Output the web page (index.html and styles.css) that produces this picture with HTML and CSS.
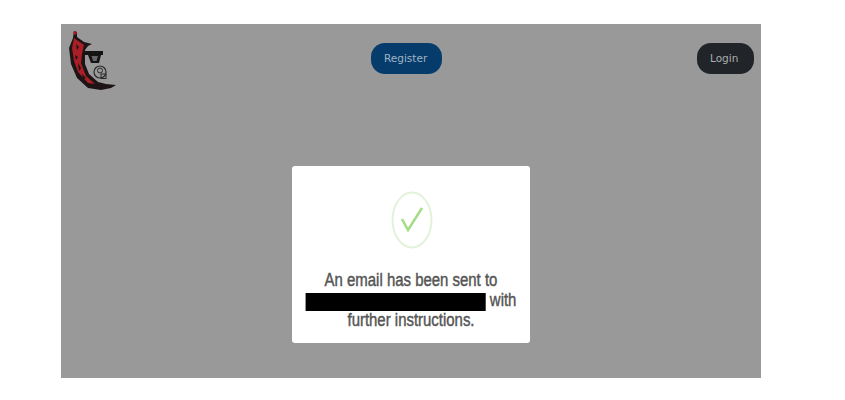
FILE: index.html
```html
<!DOCTYPE html>
<html lang="en">
<head>
    <meta charset="UTF-8" />
    <title>Email sent</title>
    <link rel="stylesheet" href="styles.css">
</head>
<body>
    <div class="stage">
        <div class="top-bar">
            <svg class="logo" viewBox="0 0 49 60" width="49" height="60">
                <path d="M6 1 L9 2 L9 7 L16 12 L24 14 L20 16 L17 20 L17 27 L17 34 L21 44 L30 52 L38 54 L48 55 L43 58 L33 60 L20 58 L9 48 L3 34 L1 18 L5 8 Z" fill="#1d1416"/>
                <path d="M6 8 L16 15 L14 24 L13 33 L18 46 L27 54 L20 53 L10 42 L6 31 L4 18 Z" fill="#a81f27"/>
                <path d="M8 14 L11 17 L9 20 Z M7 25 L10 27 L8 30 Z M10 33 L13 38 L11 41 Z M14 44 L18 48 L15 49 Z" fill="#1d1416"/>
                <circle cx="7" cy="3" r="1.8" fill="#a81f27"/>
                <path d="M17 21 H35 V25 H33 L31 33 H23 L20 25 H17 Z" fill="#141414"/>
                <path d="M23.500 26 L30 26 L28.500 31 L25 31 Z" fill="#666"/>
                <circle cx="32" cy="42" r="6" fill="none" stroke="#2b2b2b" stroke-width="1.2"/>
                <circle cx="32" cy="40.500" r="2.500" fill="none" stroke="#2b2b2b"/>
                <rect x="33" y="44" width="5" height="4.500" fill="none" stroke="#2b2b2b"/>
            </svg>
            <a class="btn btn-register">Register</a>
            <a class="btn btn-login">Login</a>
        </div>
        <div class="modal">
            <svg class="check" viewBox="0 0 42 58" width="42" height="58">
                <ellipse cx="21" cy="29" rx="19.500" ry="27.500" fill="none" stroke="#e4f2da" stroke-width="2"/>
                <path d="M11 28 L17 39 L31 17" fill="none" stroke="#a5dc86" stroke-width="2.500"/>
            </svg>
            <p class="message">An email has been sent to<br><span class="redacted"></span> with<br>further instructions.</p>
        </div>
    </div>
</body>
</html>
```

FILE: styles.css
```css
body {
    margin: 0;
    background-color: #fff;
    font-family: "Liberation Sans", Arial, sans-serif;
}

.stage {
    width: 700px;
    height: 354px;
    margin: 24px 0 0 61px;
    background-color: #999;
    overflow: hidden;
}

.top-bar {
    display: flex;
    justify-content: space-between;
    align-items: flex-start;
    padding: 6px 7px 0;
}

.logo {
    display: block;
    margin-right: -1px;
}

.btn {
    margin-top: 13px;
    height: 31px;
    padding: 0 13px;
    border-radius: 14px;
    line-height: 31px;
    font-family: "DejaVu Sans", sans-serif;
    font-size: 10.5px;
    color: #9fb4c4;
}

.btn-register {
    width: 45px;
    background-color: #063c6b;
}

.btn-login {
    width: 31px;
    background-color: #212529;
    color: #a9adb0;
}

.modal {
    width: 238px;
    height: 177px;
    margin: 76px auto 0;
    background-color: #fff;
    border-radius: 3px;
    text-align: center;
    overflow: hidden;
}

.check {
    display: block;
    margin: 25px auto 0 99px;
}

/* source text is squeezed horizontally, so scale it the same way */
.message {
    margin: 22px -30px 0;
    font-size: 18px;
    line-height: 19.5px;
    color: #555;
    -webkit-text-stroke: 0.45px #555;
    transform: scaleX(0.83);
}

.redacted {
    display: inline-block;
    width: 217px;
    height: 18px;
    vertical-align: -5px;
    background-color: #000;
}
```
